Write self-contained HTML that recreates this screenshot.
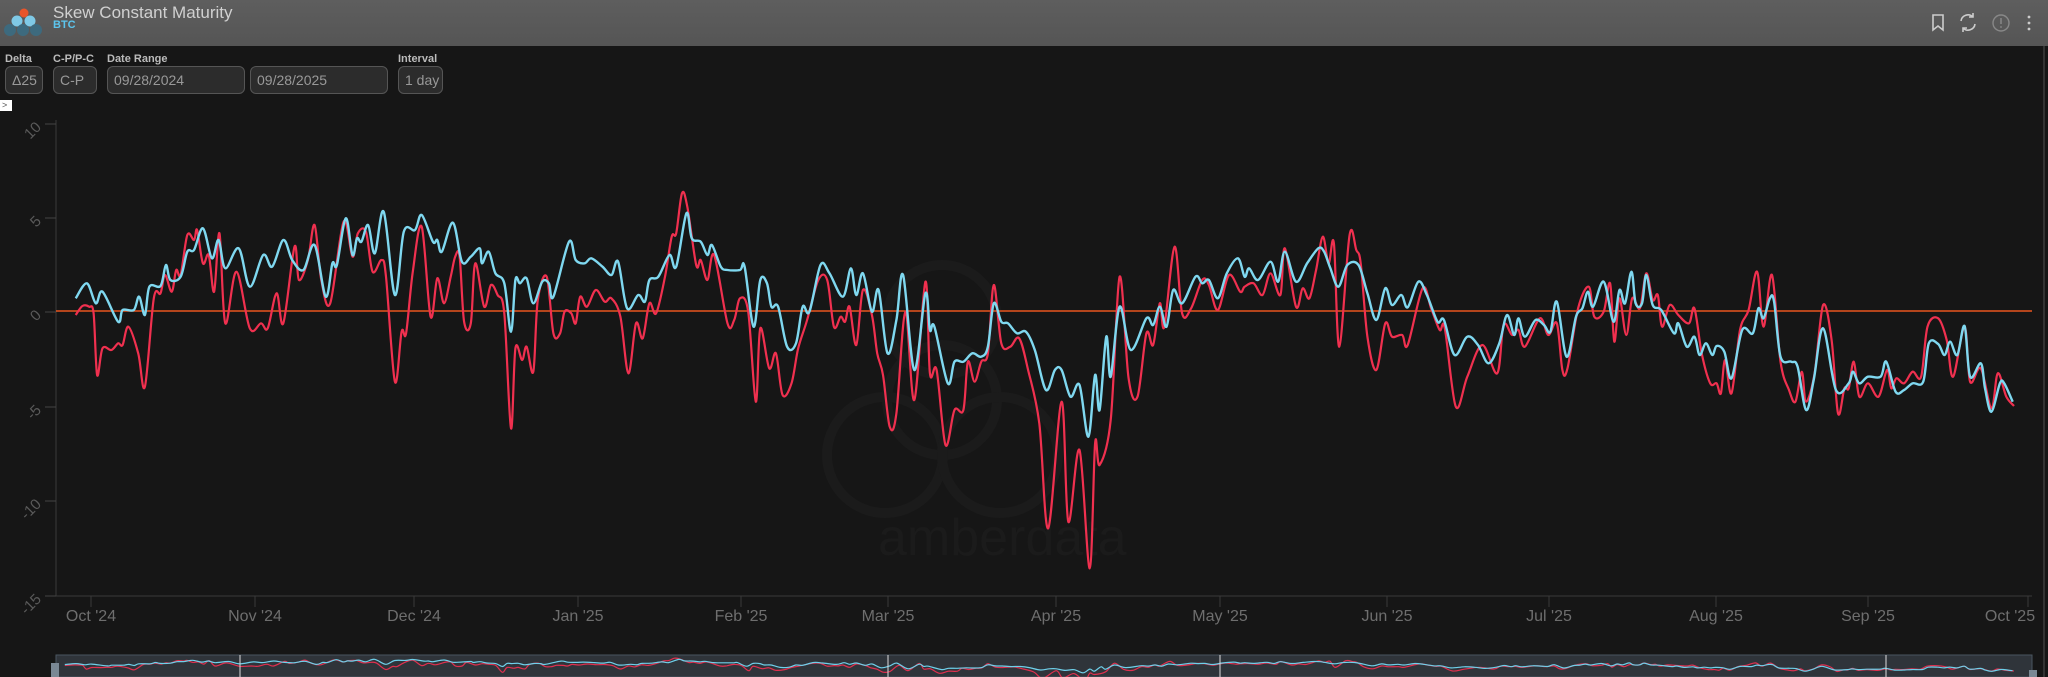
<!DOCTYPE html>
<html><head><meta charset="utf-8"><style>
*{margin:0;padding:0;box-sizing:border-box}
body{width:2048px;height:677px;background:#161616;overflow:hidden;font-family:"Liberation Sans",sans-serif;position:relative}
.hdr{position:absolute;left:0;top:0;width:2048px;height:46px;background:linear-gradient(#5e5e5e,#555)}
.title{position:absolute;left:53px;top:3px;font-size:17px;color:#d0d0d0}
.btc{position:absolute;left:53px;top:19px;font-size:11px;font-weight:bold;color:#5cc5ee}
.lbl{position:absolute;top:53px;font-size:11px;font-weight:bold;color:#bbb}
.inp{position:absolute;top:66px;height:28px;background:#2c2c2c;border:1px solid #555;border-radius:6px;color:#999;font-size:14px;padding-left:6px;line-height:26px}
svg{position:absolute;left:0;top:0}
</style></head><body>
<div class="hdr">
<svg width="46" height="46" viewBox="0 0 46 46">
<circle cx="24" cy="13" r="4.5" fill="#e8552b"/>
<circle cx="17" cy="21" r="5.5" fill="#7fc9e6"/><circle cx="30" cy="21" r="5.5" fill="#7fc9e6"/>
<circle cx="10" cy="30" r="6" fill="#3d6a7e"/><circle cx="23" cy="30" r="6" fill="#3d6a7e"/><circle cx="36" cy="30" r="6" fill="#3d6a7e"/>
</svg>
<div class="title">Skew Constant Maturity</div>
<div class="btc">BTC</div>
<svg width="2048" height="46" style="left:0;top:0">
<path d="M1933 15h10v15l-5-4-5 4z" fill="none" stroke="#ccc" stroke-width="1.6"/>
<path d="M1961 21a7 7 0 0 1 12-4M1975 24a7 7 0 0 1-12 4M1973 13v4h-4M1963 32v-4h4" fill="none" stroke="#ccc" stroke-width="1.6"/>
<circle cx="2001" cy="23" r="8" fill="none" stroke="#888" stroke-width="1.4"/>
<path d="M2001 18v6" stroke="#888" stroke-width="1.5"/><circle cx="2001" cy="27" r="0.9" fill="#888"/>
<circle cx="2029" cy="17" r="1.4" fill="#ccc"/><circle cx="2029" cy="23" r="1.4" fill="#ccc"/><circle cx="2029" cy="29" r="1.4" fill="#ccc"/>
</svg>
</div>
<div class="lbl" style="left:5px">Delta</div>
<div class="lbl" style="left:53px">C-P/P-C</div>
<div class="lbl" style="left:107px">Date Range</div>
<div class="lbl" style="left:398px">Interval</div>
<div class="inp" style="left:5px;width:38px">Δ25</div>
<div class="inp" style="left:53px;width:44px">C-P</div>
<div class="inp" style="left:107px;width:138px">09/28/2024</div>
<div class="inp" style="left:250px;width:138px">09/28/2025</div>
<div class="inp" style="left:398px;width:45px">1 day</div>
<div style="position:absolute;left:0;top:100px;width:12px;height:11px;background:#fff;color:#555;font-size:9px;line-height:11px;padding-left:2px">&gt;</div>
<svg id="ch" width="2048" height="677">
<g fill="none" stroke="#1b1b1b" stroke-width="10">
<circle cx="942" cy="320" r="55"/><circle cx="942" cy="400" r="55"/><circle cx="885" cy="455" r="58"/><circle cx="1000" cy="455" r="58"/>
</g>
<text x="878" y="555" font-size="52" fill="#1b1b1b" font-family="Liberation Sans">amberdata</text>
<line x1="2044" y1="46" x2="2044" y2="677" stroke="#333" stroke-width="2"/>
<line x1="56" y1="120" x2="56" y2="596" stroke="#3a3a3a"/>
<g stroke="#444"><line x1="45" y1="124" x2="56" y2="124"/><line x1="45" y1="218" x2="56" y2="218"/><line x1="45" y1="312" x2="56" y2="312"/><line x1="45" y1="407" x2="56" y2="407"/><line x1="45" y1="501" x2="56" y2="501"/><line x1="45" y1="596" x2="56" y2="596"/></g>
<g fill="#5a5a5a" font-size="15" text-anchor="end">
<text transform="translate(42,128) rotate(-45)">10</text>
<text transform="translate(42,222) rotate(-45)">5</text>
<text transform="translate(42,316) rotate(-45)">0</text>
<text transform="translate(42,411) rotate(-45)">-5</text>
<text transform="translate(42,505) rotate(-45)">-10</text>
<text transform="translate(42,600) rotate(-45)">-15</text>
</g>
<line x1="56" y1="596" x2="2032" y2="596" stroke="#3a3a3a"/>
<g id="xt" fill="#6e6e6e" font-size="16" text-anchor="middle"></g>
<line x1="56" y1="311" x2="2032" y2="311" stroke="#e8551f" stroke-width="1.5"/>
<path id="red" fill="none" stroke="#f0304f" stroke-width="2.2" stroke-linejoin="round"/>
<path id="cy" fill="none" stroke="#7fd8f0" stroke-width="2.4" stroke-linejoin="round"/>
<rect x="56" y="655" width="1976" height="22" fill="#2f343a" stroke="#4a5560"/>
<path id="nr" fill="none" stroke="#e0304f" stroke-width="1.2"/>
<path id="nc" fill="none" stroke="#6fd0ea" stroke-width="1.2"/>
<g stroke="#ddd"><line x1="240" y1="655" x2="240" y2="677"/><line x1="888" y1="655" x2="888" y2="677"/><line x1="1220" y1="655" x2="1220" y2="677"/><line x1="1886" y1="655" x2="1886" y2="677"/></g>
<rect x="51" y="663" width="8" height="14" fill="#7a8894"/><rect x="2029" y="670" width="8" height="7" fill="#7a8894"/>
</svg>
<script>
var C4=[80,355,105,310,125,370,140,335,175,425,185,390,210,390,222,350,235,405,245,320,270,318,282,255,292,300,315,290,330,215,345,210,365,145,385,235,400,180,415,265,445,205,470,320,500,225,520,260,545,180,565,240,590,270,615,195,640,350,655,250,665,255,685,115,700,225,710,175,720,185,735,135,750,220,770,95,795,345,815,155,840,150,855,105,880,185,890,180,900,215,925,128,945,245,965,230,985,205,990,250,1005,215,1020,280,1040,310,1055,455,1065,300,1075,310,1090,295,1105,370,1125,305,1140,310,1150,350,1185,185,1200,240,1220,250,1235,235,1260,260,1280,285,1295,245,1315,385,1340,345,1355,365,1365,300,1385,290,1410,225,1425,260,1448,100,1460,175,1480,185,1495,225,1505,195,1525,260,1540,270,1568,270];
var R4=[80,405,95,378,110,380,120,400,128,585,140,505,160,510,175,490,185,495,198,440,220,520,235,620,255,355,270,340,280,285,295,335,305,270,315,285,330,165,345,180,352,150,365,250,378,225,390,335,402,160,415,430,440,275,470,445,495,430,510,445,530,340,545,430,570,200,580,300,600,240,615,135,630,300,650,370,680,125,700,230,712,160,730,155,745,275,765,240,775,290,795,605,810,455,820,460,835,275,855,140,875,410,890,295,905,370,920,290,930,230,940,230,950,425,965,430,975,250,995,380,1010,315,1025,345,1040,400,1055,745,1065,505,1080,540,1090,500,1105,575,1115,360,1135,290,1150,460,1165,460,1175,395,1190,400,1200,430,1210,350,1225,380,1245,330,1265,365,1280,355,1300,410,1318,580,1335,430,1350,475,1365,370,1380,400,1400,290,1415,170,1425,160,1438,40,1450,80,1470,255,1480,240,1495,300,1510,225,1540,430,1555,420,1568,355];
var C5=[100,260,120,440,135,300,150,310,160,380,175,380,195,500,215,490,230,380,245,395,270,255,290,280,320,350,338,265,350,345,365,280,385,395,400,330,420,520,440,420,455,285,480,570,505,340,515,450,525,440,555,610,570,545,590,545,610,520,630,530,645,500,658,370,675,425,690,430,710,460,730,455,750,510,775,630,795,570,810,570,830,650,850,615,870,770,885,585,895,690,910,470,920,590,940,380,965,510,1000,415,1015,435,1030,380,1045,440,1060,330,1080,370,1110,290,1125,310,1140,300,1160,355,1180,280,1205,235,1220,290,1230,265,1250,300,1278,245,1295,305,1310,215,1335,305,1360,250,1385,205,1398,215,1412,265,1430,320,1450,255,1475,255,1495,340,1515,420,1535,325,1550,375];
var R5=[108,395,125,665,135,445,155,565,170,520,185,645,205,610,220,505,240,420,265,300,285,300,300,440,315,410,325,425,335,380,350,495,365,330,385,405,397,520,410,585,425,740,440,700,460,395,480,660,505,305,515,580,530,570,550,795,570,690,590,690,600,545,615,605,630,545,645,520,658,315,675,490,695,500,715,475,735,570,760,730,780,1045,810,665,825,1025,850,810,873,1165,885,790,895,855,920,720,940,290,960,595,980,650,1000,460,1015,495,1030,370,1040,440,1063,200,1080,400,1100,385,1125,300,1140,315,1160,390,1185,285,1210,335,1220,320,1240,310,1260,345,1278,280,1300,345,1310,205,1335,380,1350,325,1365,355,1380,270,1395,170,1408,250,1420,190,1432,500,1455,165,1470,210,1480,250,1495,470,1515,570,1535,430,1550,470];
var C6=[50,225,65,262,90,185,110,225,135,305,150,300,175,405,205,350,230,375,255,430,280,370,298,285,315,345,325,295,340,350,365,300,385,315,400,335,415,245,438,410,460,290,475,265,488,215,500,260,525,185,548,305,562,210,575,250,590,155,600,250,615,250,625,165,640,255,660,270,690,340,700,310,720,380,738,350,750,405,765,370,780,405,790,378,808,395,825,475,850,330,875,340,888,265,900,295,915,235,925,245,940,410,965,425,980,440,1000,570,1018,480,1040,325,1070,510,1100,490,1110,455,1125,490,1145,470,1175,470,1188,425,1210,515,1230,510,1250,490,1275,485,1288,370,1310,372,1325,405,1338,365,1355,405,1372,318,1385,470,1410,430,1420,505,1435,575,1455,490,1465,490,1485,545];
var R6=[52,345,65,375,100,205,120,265,140,330,152,325,178,560,205,470,240,375,275,460,290,315,310,345,325,330,340,380,375,295,395,345,415,310,428,450,440,445,465,265,490,200,503,290,525,275,540,190,550,365,562,235,578,345,592,235,610,265,625,160,640,240,652,225,662,320,680,255,700,285,725,310,738,265,755,400,775,490,790,490,800,520,810,420,825,520,845,330,865,270,885,155,900,320,920,165,940,425,960,510,975,545,990,455,1000,545,1020,460,1040,255,1060,360,1075,580,1090,505,1100,505,1112,425,1125,530,1145,490,1170,530,1190,450,1200,505,1212,475,1230,490,1250,455,1270,470,1285,320,1310,295,1330,360,1345,470,1372,320,1385,485,1410,445,1435,565,1450,460,1470,530,1488,558];
function conv(a,x0,sx,y0){var r=[];for(var i=0;i<a.length;i+=2)r.push([x0+a[i]/sx,y0+a[i+1]/3]);return r;}
function smooth(p){var d="M"+p[0][0].toFixed(1)+" "+p[0][1].toFixed(1);for(var i=0;i<p.length-1;i++){var p0=p[i-1]||p[i],p1=p[i],p2=p[i+1],p3=p[i+2]||p2;var c1x=p1[0]+(p2[0]-p0[0])/6,c1y=p1[1]+(p2[1]-p0[1])/6,c2x=p2[0]-(p3[0]-p1[0])/6,c2y=p2[1]-(p3[1]-p1[1])/6;d+="C"+c1x.toFixed(1)+" "+c1y.toFixed(1)+" "+c2x.toFixed(1)+" "+c2y.toFixed(1)+" "+p2[0].toFixed(1)+" "+p2[1].toFixed(1);}return d;}
var cp=conv(C4,40,2.24,180).concat(conv(C5,700,2.24,180),conv(C6,1380,2.347,220));
var rp=conv(R4,40,2.24,180).concat(conv(R5,700,2.24,180),conv(R6,1380,2.347,220));
document.getElementById("cy").setAttribute("d",smooth(cp));
document.getElementById("red").setAttribute("d",smooth(rp));
function nav(p){var x0=56,x1=2032,sx=(x1-x0)/(2032-67);return p.map(function(q){return[x0+(q[0]-67)*sx,658+(q[1]-190)*0.06];});}
document.getElementById("nc").setAttribute("d",smooth(nav(cp)));
document.getElementById("nr").setAttribute("d",smooth(nav(rp)));
var L=[["Oct '24",91],["Nov '24",255],["Dec '24",414],["Jan '25",578],["Feb '25",741],["Mar '25",888],["Apr '25",1056],["May '25",1220],["Jun '25",1387],["Jul '25",1549],["Aug '25",1716],["Sep '25",1868],["Oct '25",2028]];
var g=document.getElementById("xt"),s="";L.forEach(function(l){s+='<line x1="'+l[1]+'" y1="596" x2="'+l[1]+'" y2="607" stroke="#3a3a3a"/><text x="'+(l[0]=="Oct '25"?2010:l[1])+'" y="621">'+l[0]+'</text>';});g.innerHTML=s;
</script>
</body></html>
